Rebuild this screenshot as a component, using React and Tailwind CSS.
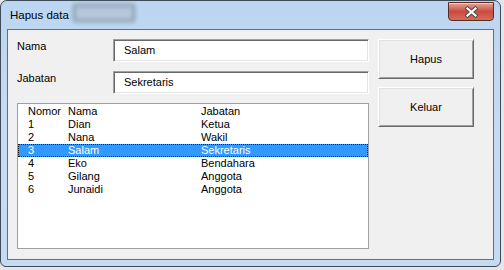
import React from "react";

const rows = [
  ["1", "Dian", "Ketua"],
  ["2", "Nana", "Wakil"],
  ["3", "Salam", "Sekretaris"],
  ["4", "Eko", "Bendahara"],
  ["5", "Gilang", "Anggota"],
  ["6", "Junaidi", "Anggota"],
];

function Row({ a, b, c, selected }) {
  return (
    <div
      className={
        "flex h-[13px] leading-[13px] " +
        (selected
          ? "bg-[#3399ff] text-white outline-1 outline-dotted outline-[#1a1a1a] -outline-offset-1"
          : "text-black")
      }
    >
      <div className="w-[50px] pl-[10px]">{a}</div>
      <div className="w-[133px]">{b}</div>
      <div>{c}</div>
    </div>
  );
}

function TextBox({ value }) {
  return (
    <div className="w-[256px] h-[23px] bg-white border border-t-[#a0a0a0] border-l-[#a0a0a0] border-b-[#ffffff] border-r-[#ffffff] shadow-[inset_1px_1px_0_#696969,inset_-1px_-1px_0_#e3e3e3] flex items-center pl-[10px] text-[11px] text-black">
      {value}
    </div>
  );
}

function Btn({ label }) {
  return (
    <div className="w-[96px] h-[40px] bg-[#f0f0f0] border border-t-[#ffffff] border-l-[#ffffff] border-b-[#696969] border-r-[#696969] shadow-[inset_1px_1px_0_#e3e3e3,inset_-1px_-1px_0_#a0a0a0] flex items-center justify-center text-[11px] text-black">
      {label}
    </div>
  );
}

export default function App() {
  return (
    <div className="w-[504px] h-[270px] bg-[#e6e6e6] font-['Liberation_Sans',Arial,sans-serif] text-[11px]">
      <div className="w-[501px] h-[267px] rounded-t-[7px] rounded-b-[6px] border border-[#3e4b58] bg-gradient-to-b from-[#bcd6f1] via-[#c6dcf3] to-[#c4dbf2] flex flex-col px-[6px] pb-[6px]">
        {/* Title bar */}
        <div className="h-[28px] flex items-start">
          <div className="ml-[3px] mt-[7px] text-[11.5px] leading-[14px] text-black">Hapus data</div>
          <div className="ml-[4px] mt-[3px] w-[62px] h-[18px] rounded-[3px] border-2 border-[#7d8896] bg-[#b3c6da] blur-[2px]" />
          <div className="flex-1" />
          <div className="mt-[1px] w-[46px] h-[19px] rounded-b-[4px] border border-[#5c2b25] bg-gradient-to-b from-[#e2a497] via-[#c94a3e] to-[#d46c5a] flex items-center justify-center shadow-[inset_0_1px_0_rgba(255,255,255,0.5)]">
            <svg width="15" height="12" viewBox="0 0 15 12">
              <path d="M3.5 2.5 L11.5 9.5 M11.5 2.5 L3.5 9.5" stroke="#4a4a4a" strokeWidth="4" strokeLinecap="square" fill="none" />
              <path d="M3.5 2.5 L11.5 9.5 M11.5 2.5 L3.5 9.5" stroke="#ffffff" strokeWidth="2.2" strokeLinecap="square" fill="none" />
            </svg>
          </div>
        </div>
        {/* Client area */}
        <div className="flex-1 border border-[#5f7185] bg-[#f0f0f0] pl-[9px] pt-[9px] flex gap-[9px]">
          <div className="w-[352px] flex flex-col gap-[9px]">
            <div className="flex items-start">
              <div className="w-[96px] mt-[1px] leading-[13px] text-black">Nama</div>
              <TextBox value="Salam" />
            </div>
            <div className="flex items-start">
              <div className="w-[96px] mt-[1px] leading-[13px] text-black">Jabatan</div>
              <TextBox value="Sekretaris" />
            </div>
            <div className="h-[146px] bg-white border border-[#a0a0a0] pt-[1px]">
              <Row a="Nomor" b="Nama" c="Jabatan" />
              {rows.map((r) => (
                <Row key={r[0]} a={r[0]} b={r[1]} c={r[2]} selected={r[0] === "3"} />
              ))}
            </div>
          </div>
          <div className="flex flex-col gap-[8px]">
            <Btn label="Hapus" />
            <Btn label="Keluar" />
          </div>
        </div>
      </div>
    </div>
  );
}
